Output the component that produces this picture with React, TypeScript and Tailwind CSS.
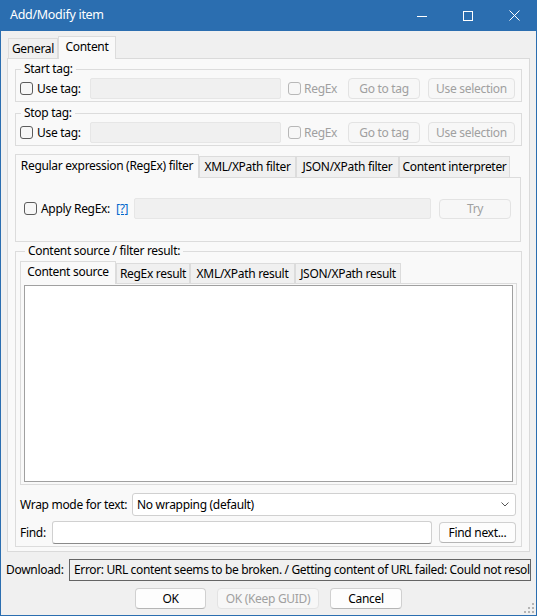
import React from 'react';

const font = { fontFamily: '"Noto Sans", "Open Sans", sans-serif' };

function CheckBox({ disabled = false }: { disabled?: boolean }) {
  return (
    <span
      className={`inline-block w-[13px] h-[13px] shrink-0 rounded-[3px] border ${
        disabled ? 'border-[#b8b8b8] bg-[#f7f7f7]' : 'border-[#5c5c5c] bg-[#f7f7f7]'
      }`}
    />
  );
}

function Btn({ label, w, disabled = false, h = 'h-[21px]' }: { label: string; w: string; disabled?: boolean; h?: string }) {
  return (
    <div
      className={`${w} ${h} shrink-0 flex items-center justify-center whitespace-nowrap rounded-[4px] border ${
        disabled
          ? 'border-[#e3e3e3] bg-[#f7f7f7] text-[#a0a0a0]'
          : 'border-[#d0d0d0] border-b-[#b5b5b5] bg-[#fdfdfd] text-black'
      }`}
    >
      {label}
    </div>
  );
}

function TagGroup({ title }: { title: string }) {
  return (
    <fieldset className="border border-[#dcdcdc]">
      <legend className="ml-[5px] px-[3px] leading-[16px]">{title}</legend>
      <div className="flex items-center h-[21px] mt-[1px] mb-[2px] pl-[4px]">
        <div className="w-[70px] flex items-center">
          <CheckBox />
          <span className="ml-[4px]">Use tag:</span>
        </div>
        <div className="w-[191px] h-[21px] bg-[#f0f0f0] border border-[#e6e6e6] rounded-[2px]" />
        <div className="w-[60px] ml-[7px] flex items-center text-[#a0a0a0]">
          <CheckBox disabled />
          <span className="ml-[3px]">RegEx</span>
        </div>
        <Btn label="Go to tag" w="w-[72px]" disabled />
        <div className="ml-[8px]">
          <Btn label="Use selection" w="w-[87px]" disabled />
        </div>
      </div>
    </fieldset>
  );
}

function Tab({ label, w, selected = false, small = false }: { label: string; w: string; selected?: boolean; small?: boolean }) {
  return (
    <div
      className={`${w} shrink-0 flex items-center justify-center whitespace-nowrap border border-[#dcdcdc] ${
        selected
          ? `bg-[#f9f9f9] border-b-0 relative z-10 -mb-px ${small ? 'h-[23px] pb-[2px]' : 'h-[24px] pb-[2px]'}`
          : `bg-[#f0f0f0] border-b-0 ${small ? 'h-[20px]' : 'h-[21px]'}`
      }`}
    >
      {label}
    </div>
  );
}

export default function App() {
  return (
    <div
      style={font}
      className="relative w-[537px] h-[616px] flex flex-col bg-[#f0f0f0] border border-t-0 border-[#2b6eb0] text-[12px] tracking-[-0.3px] text-black overflow-hidden"
    >
      {/* title bar */}
      <div className="h-[31px] -mx-px shrink-0 flex items-center bg-[#2b6eb0] text-white">
        <span className="pl-[10px] flex-1 text-[12.5px]">Add/Modify item</span>
        <div className="w-[46px] h-full flex items-center justify-center">
          <svg width="10" height="10" viewBox="0 0 10 10">
            <path d="M0 5.5h10" stroke="white" strokeWidth="1" />
          </svg>
        </div>
        <div className="w-[46px] h-full flex items-center justify-center">
          <svg width="10" height="10" viewBox="0 0 10 10">
            <rect x="0.5" y="0.5" width="9" height="9" fill="none" stroke="white" strokeWidth="1" />
          </svg>
        </div>
        <div className="w-[46px] h-full flex items-center justify-center">
          <svg width="11" height="11" viewBox="0 0 11 11">
            <path d="M0.5 0.5l10 10M10.5 0.5l-10 10" stroke="white" strokeWidth="1" />
          </svg>
        </div>
      </div>

      {/* main tab control */}
      <div className="ml-[6px] w-[523px]">
        <div className="h-[27px] flex items-end pl-[1px]">
          <Tab label="General" w="w-[50px]" small />
          <Tab label="Content" w="w-[58px]" selected small />
        </div>
        <div className="h-[494px] border border-[#dadada] bg-[#f9f9f9] pl-[7px] pr-[7px] pt-[2px]">
          <TagGroup title="Start tag:" />
          <div className="mt-[3px]">
            <TagGroup title="Stop tag:" />
          </div>

          {/* regex tab control */}
          <div className="mt-[8px]">
            <div className="flex items-end h-[23px]">
              <Tab label="Regular expression (RegEx) filter" w="w-[184px]" selected />
              <Tab label="XML/XPath filter" w="w-[97px]" />
              <Tab label="JSON/XPath filter" w="w-[103px]" />
              <Tab label="Content interpreter" w="w-[111px]" />
            </div>
            <div className="w-[506px] h-[65px] border border-[#dcdcdc] bg-[#f9f9f9] pt-[20px] pl-[8px]">
              <div className="flex items-center h-[21px]">
                <div className="w-[110px] flex items-center">
                  <CheckBox />
                  <span className="ml-[4px]">Apply RegEx:</span>
                  <span className="ml-[6px] text-[#0066cc] underline">[?]</span>
                </div>
                <div className="w-[297px] h-[21px] bg-[#f0f0f0] border border-[#e6e6e6] rounded-[2px]" />
                <div className="ml-[8px]">
                  <Btn label="Try" w="w-[72px]" h="h-[20px]" disabled />
                </div>
              </div>
            </div>
          </div>

          {/* content source */}
          <fieldset className="mt-[1px] border border-[#dcdcdc] px-[4px] pb-[2px]">
            <legend className="ml-[5px] px-[3px] leading-[16px]">Content source / filter result:</legend>
            <div className="mt-[2px] flex items-end h-[22px]">
              <Tab label="Content source" w="w-[96px]" selected small />
              <Tab label="RegEx result" w="w-[74px]" small />
              <Tab label="XML/XPath result" w="w-[105px]" small />
              <Tab label="JSON/XPath result" w="w-[106px]" small />
            </div>
            <div className="h-[202px] flex border border-[#dcdcdc] bg-[#f9f9f9] px-[3px] pt-[1px] pb-[2px]">
              <div className="flex-1 bg-white border border-[#a0a0a0]" />
            </div>
            <div className="mt-[8px] flex items-center h-[23px]">
              <span className="w-[112px] whitespace-nowrap">Wrap mode for text:</span>
              <div className="w-[384px] h-[23px] flex items-center justify-between bg-white border border-[#d0d0d0] rounded-[3px] pl-[4px] pr-[6px]">
                <span>No wrapping (default)</span>
                <svg width="8" height="5" viewBox="0 0 8 5">
                  <path d="M0.5 0.5l3.5 3.5 3.5-3.5" fill="none" stroke="#555" strokeWidth="1" />
                </svg>
              </div>
            </div>
            <div className="mt-[5px] flex items-center h-[23px]">
              <span className="w-[32px]">Find:</span>
              <div className="w-[380px] h-[23px] bg-white border border-[#d0d0d0] border-b-[#8a8a8a] rounded-[3px]" />
              <div className="ml-[7px]">
                <Btn label="Find next..." w="w-[77px]" />
              </div>
            </div>
          </fieldset>
        </div>
      </div>

      {/* download */}
      <div className="mt-[7px] ml-[5px] flex items-center h-[22px]">
        <span className="w-[63px]">Download:</span>
        <div className="w-[462px] h-[22px] flex items-center border border-[#646464] bg-[#f0f0f0] pl-[4px] overflow-hidden whitespace-nowrap tracking-[-0.36px]">
          Error: URL content seems to be broken. / Getting content of URL failed: Could not resol
        </div>
      </div>

      {/* buttons */}
      <div className="mt-[7px] flex justify-center gap-[11px]">
        <Btn label="OK" w="w-[71px]" />
        <Btn label="OK (Keep GUID)" w="w-[102px]" disabled />
        <Btn label="Cancel" w="w-[72px]" />
      </div>

      {/* size grip */}
      <svg className="absolute right-[2px] bottom-[2px]" width="10" height="10" viewBox="0 0 10 10">
        <g fill="#b4b4b4">
          <rect x="8" y="0" width="2" height="2" />
          <rect x="4" y="4" width="2" height="2" />
          <rect x="8" y="4" width="2" height="2" />
          <rect x="0" y="8" width="2" height="2" />
          <rect x="4" y="8" width="2" height="2" />
          <rect x="8" y="8" width="2" height="2" />
        </g>
      </svg>
    </div>
  );
}
